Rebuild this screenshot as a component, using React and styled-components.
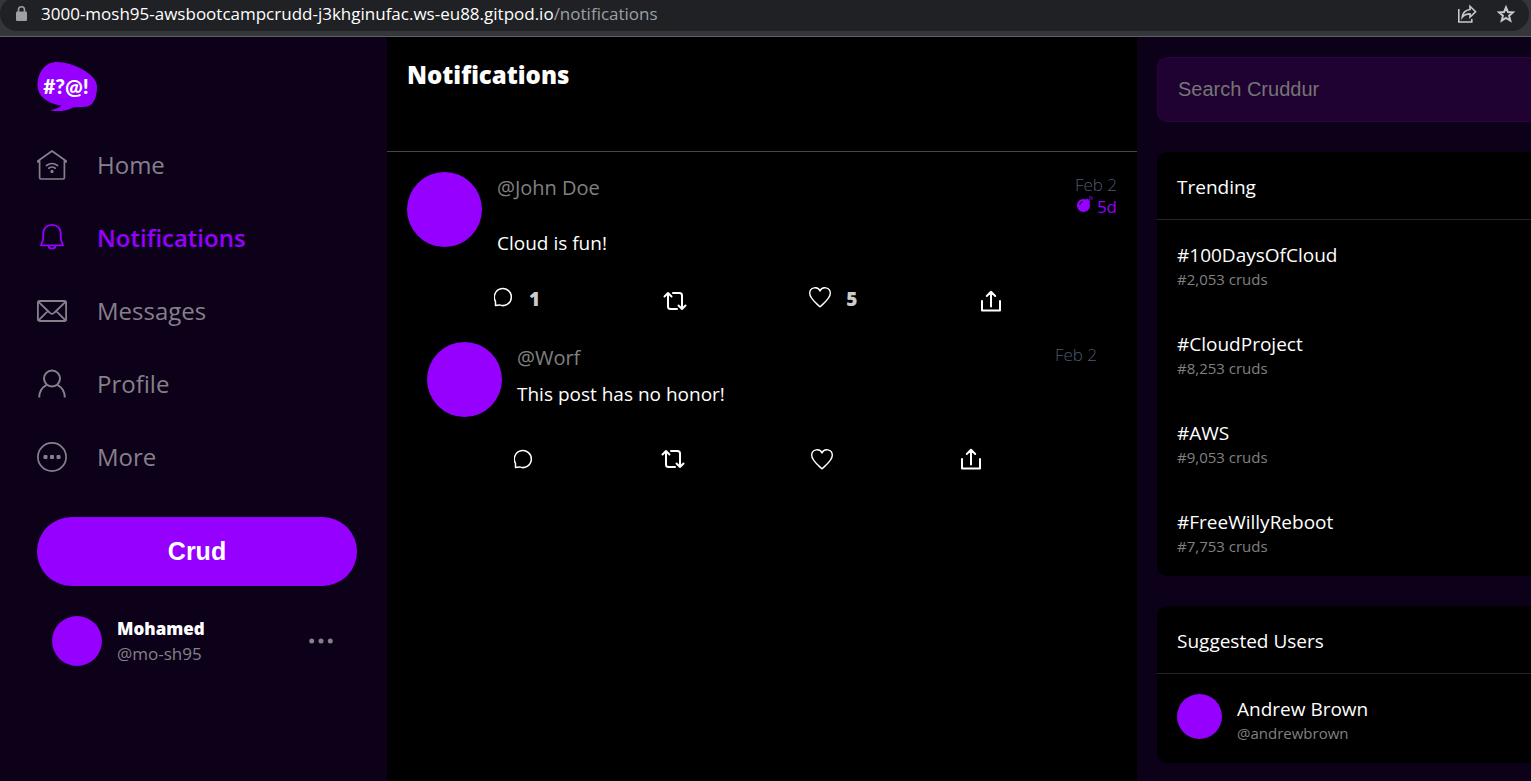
import React from "react";
import styled, { createGlobalStyle, css } from "styled-components";
import { FaBomb } from "react-icons/fa";

const purple = "#9500ff";
const ui = `"Open Sans", "Noto Sans", sans-serif`;
const arial = `"Liberation Sans", Arial, sans-serif`;

const GlobalStyle = createGlobalStyle`
  * { box-sizing: border-box; }
  body { margin: 0; background: #000; color: #fff; font-family: ${ui}; }
  a { color: inherit; text-decoration: none; }
  button { border: 0; padding: 0; background: none; color: inherit; font-family: inherit; cursor: pointer; }
  h1, h2, p, ul { margin: 0; padding: 0; list-style: none; }
  svg { display: block; flex: none; }
`;

/* ---------- shell ---------- */

const Page = styled.div`
  min-height: 100vh;
  display: flex;
  flex-direction: column;
  overflow: hidden;
`;

const BrowserBar = styled.header`
  background: #35363a;
  border-bottom: 1px solid #5f6063;
  padding: 0 2px 5px 0;
`;

const AddressBox = styled.div`
  height: 34px;
  margin-top: -3px;
  padding: 0 12px 0 15px;
  border-radius: 17px;
  background: #202124;
  color: #9aa0a6;
  display: flex;
  align-items: center;
  gap: 13px;
`;

const Address = styled.p`
  flex: 1;
  min-width: 0;
  white-space: nowrap;
  overflow: hidden;
  font-size: 17px;
  line-height: 28px;
  b { color: #fff; font-weight: 400; }
`;

const BrowserTools = styled.div`
  display: flex;
  gap: 18px;
  color: #c7c8ca;
`;

const Layout = styled.div`
  flex: 1;
  display: grid;
  grid-template-columns: 387px minmax(0, 1fr) 394px;
`;

/* ---------- left sidebar ---------- */

const Sidebar = styled.aside`
  background: #0d0119;
  padding: 25px 30px 25px 37px;
`;

const Nav = styled.nav`
  margin: 17px 0 24px;
`;

const NavLink = styled.a`
  display: flex;
  align-items: center;
  gap: 30px;
  height: 73px;
  font-size: 24px;
  color: #86808b;
  ${(p) => p.$active && css`
    && { color: ${purple}; font-weight: 600; }
  `}
`;

const CrudButton = styled.button`
  && {
    display: block;
    width: 100%;
    height: 69px;
    border-radius: 35px;
    background: ${purple};
    color: #fff;
    font: bold 25px ${arial};
  }
`;

const Account = styled.div`
  display: flex;
  align-items: center;
  gap: 15px;
  padding: 30px 24px 0 15px;
  color: #86808b;
`;

const AccountText = styled.div`
  flex: 1;
  font-size: 17px;
  line-height: 25px;
  strong { display: block; color: #fff; font-weight: 800; }
`;

const Avatar = styled.div`
  flex: none;
  width: ${(p) => p.$size}px;
  height: ${(p) => p.$size}px;
  border-radius: 50%;
  background: ${purple};
`;

/* ---------- feed ---------- */

const FeedHeader = styled.div`
  height: 115px;
  padding: 20px;
  border-bottom: 1px solid #45454b;
  h1 { font-size: 24px; line-height: 36px; font-weight: 800; }
`;

const Post = styled.article`
  padding: 20px 20px 10px;
  margin: 0 ${(p) => (p.$reply ? 20 : 0)}px;
`;

const PostMain = styled.div`
  display: flex;
  gap: 15px;
  min-height: 77px;
`;

const PostContent = styled.div`
  flex: 1;
  padding-top: 2px;
  font-size: 19px;
  line-height: 27px;
`;

const PostTop = styled.div`
  display: flex;
  justify-content: space-between;
  margin-bottom: 10px;
  font-size: 20px;
  color: #808080;
`;

const PostMeta = styled.div`
  padding-bottom: 2px;
  font-size: 17px;
  line-height: 22px;
  font-weight: 300;
  color: #4e5a70;
  text-align: right;
`;

const Expires = styled.div`
  display: flex;
  justify-content: flex-end;
  gap: 4px;
  color: ${purple};
  font-weight: 400;
`;

const Activities = styled.div`
  display: flex;
  justify-content: space-between;
  align-items: flex-end;
  padding: 0 115px 0 87px;
  margin-top: 29px;
`;

const Activity = styled.button`
  display: flex;
  align-items: flex-start;
  gap: 15px;
  span {
    font-size: 19px;
    line-height: 26px;
    font-weight: 800;
    color: #ccc;
  }
`;

/* ---------- right column ---------- */

const Aside = styled.aside`
  background: #0d0119;
  padding: 20px 0 18px 20px;
  display: flex;
  flex-direction: column;
  gap: 30px;
`;

const Search = styled.input`
  width: 100%;
  height: 65px;
  padding: 0 20px;
  border: 1px solid #28053f;
  border-right: 0;
  border-radius: 10px 0 0 10px;
  background: #1f0232;
  color: #fff;
  outline: none;
  font: 20px ${arial};
  &::placeholder { color: #757575; opacity: 1; }
`;

const Card = styled.section`
  background: #000;
  border-radius: 10px 0 0 10px;
  h2 {
    padding: 22px 20px 18px;
    border-bottom: 1px solid #24242c;
    font-size: 19px;
    line-height: 27px;
    font-weight: 400;
  }
`;

const CardItem = styled.a`
  display: flex;
  gap: 15px;
  padding: 20px;
  height: 89px;
`;

const ItemText = styled.div`
  padding-top: 2px;
  font-size: 19px;
  line-height: 27px;
  small {
    display: block;
    font-size: 15px;
    line-height: 20px;
    color: #808080;
  }
`;

/* ---------- icons ---------- */

const Stroke = ({ w, h = w, sw = 2, children }) => (
  <svg width={w} height={h} viewBox={`0 0 ${w} ${h}`} fill="none" stroke="currentColor"
    strokeWidth={sw} strokeLinecap="round" strokeLinejoin="round" aria-hidden="true">
    {children}
  </svg>
);

const HomeIcon = () => (
  <Stroke w={30} sw={1.7}>
    <path d="M.9 12V11L15 1l14.100 10v1M2.600 11v16.500a1.500 1.500 0 0 0 1.500 1.500h21.800a1.500 1.500 0 0 0 1.500-1.500V11" />
    <path d="M9.500 15.500q5.500-4 11 0M11.800 18.200q3.200-2.400 6.400 0" />
    <circle cx="15" cy="21.500" r=".8" fill="currentColor" />
  </Stroke>
);

const BellIcon = () => (
  <Stroke w={30} sw={1.8}>
    <path d="M15 1.800c-5.600 0-8.800 3.800-8.800 8.800v5.500c0 2.700-2.200 4.200-2.200 6.200h22c0-2-2.200-3.500-2.200-6.200v-5.500c0-5-3.200-8.800-8.800-8.800Z" />
    <path d="M11.500 22.600c.2 4 6.800 4 7 0" />
  </Stroke>
);

const MailIcon = () => (
  <Stroke w={30} sw={1.8}>
    <rect x=".9" y="5" width="28.200" height="20" rx="1.800" />
    <path d="M1.500 5.800 12.500 16.500q2.500 2.600 5 0L28.500 5.800M1.500 24.300l9-9M28.500 24.300l-9-9" />
  </Stroke>
);

const ProfileIcon = () => (
  <Stroke w={30} sw={2}>
    <circle cx="15" cy="9.500" r="8" />
    <path strokeLinecap="butt" d="M2.200 28.500c0-6.500 3-10.500 7.500-12.700M27.800 28.500c0-6.500-3-10.500-7.500-12.700" />
  </Stroke>
);

const MoreIcon = () => (
  <Stroke w={30} sw={1.7}>
    <circle cx="15" cy="15" r="14.100" />
    <g fill="currentColor" stroke="none">
      <rect x="6.500" y="13" width="4" height="4" rx="1" />
      <rect x="13" y="13" width="4" height="4" rx="1" />
      <rect x="19.500" y="13" width="4" height="4" rx="1" />
    </g>
  </Stroke>
);

const DotsIcon = () => (
  <svg width="24" height="6" viewBox="0 0 24 6" fill="currentColor" aria-hidden="true">
    <circle cx="2.700" cy="3" r="2.500" /><circle cx="12" cy="3" r="2.500" /><circle cx="21.300" cy="3" r="2.500" />
  </svg>
);

const ReplyIcon = () => (
  <Stroke w={20} h={22} sw={1.5}>
    <path d="M1.500 19.500V15.400A8.500 8.500 0 1 1 5.500 18.900Z" />
  </Stroke>
);

const RepostIcon = () => (
  <Stroke w={24} h={22} sw={2}>
    <path d="M1.500 6.500 5 3l3.500 3.500M5 3.500v13A2.500 2.500 0 0 0 7.500 19H14M22.500 15.500 19 19l-3.500-3.500M19 18.500v-13A2.500 2.500 0 0 0 16.500 3H10" />
  </Stroke>
);

const HeartIcon = () => (
  <Stroke w={22} h={22} sw={1.4}>
    <path d="M11 20.800C6.500 16.500.7 12.600.7 7.300c0-6.300 8.300-7.500 10.300-2.300 2-5.200 10.300-4 10.300 2.300 0 5.300-5.800 9.200-10.300 13.500Z" />
  </Stroke>
);

const ShareIcon = () => (
  <Stroke w={22} h={22} sw={2}>
    <path d="M2 11v9.500h18V11M11 16.500V2M6.800 6 11 1.800 15.200 6" />
  </Stroke>
);

const LockIcon = () => (
  <svg width="13" height="16" viewBox="0 0 13 16" aria-hidden="true">
    <rect x="1" y="5.500" width="11" height="9.500" rx="1.200" fill="currentColor" />
    <path d="M3.500 6V3.800a3 3 0 0 1 6 0V6" fill="none" stroke="currentColor" strokeWidth="1.600" />
  </svg>
);

const PageShareIcon = () => (
  <Stroke w={20} h={20} sw={1.6}>
    <path strokeLinejoin="miter" strokeLinecap="butt" d="M1.800 5v13h13v-3" />
    <path strokeLinejoin="miter" d="M13 2.300 18.600 7.800 13 13.200v-3.300c-3.500 0-6 .9-7.800 3.300.5-4.300 3.300-7.100 7.800-7.700Z" />
  </Stroke>
);

const StarIcon = () => (
  <Stroke w={22} h={20} sw={2}>
    <path strokeLinejoin="miter" d="M11 3.400 12.900 8l5 .4-3.800 3.300 1.200 4.900L11 14l-4.300 2.600 1.200-4.900L4.100 8.400l5-.4Z" />
  </Stroke>
);

const Logo = () => (
  <svg width="61" height="49" viewBox="0 0 61 49" role="img" aria-label="Cruddur">
    <path fill={purple} d="M20 0C36 0 59.500 12 60 24c.2 7-1.500 14-5 18-4 4-14 3-19 3.500-7 4-15 4.500-23 2.700 5-.8 9-2.200 11.500-4.700C11 42 0 34 .5 22.500 1 9 9 0 20 0Z" />
    <text x="29" y="32" textAnchor="middle" fill="#fff" fontFamily="Lato, sans-serif" fontWeight="900" fontSize="21">#?@!</text>
  </svg>
);

/* ---------- data ---------- */

const links = [
  ["Home", HomeIcon],
  ["Notifications", BellIcon],
  ["Messages", MailIcon],
  ["Profile", ProfileIcon],
  ["More", MoreIcon],
];

const posts = [
  { handle: "John Doe", text: "Cloud is fun!", date: "Feb 2", expires: "5d", replies: 1, likes: 5 },
  { handle: "Worf", text: "This post has no honor!", date: "Feb 2", reply: true },
];

const trends = [
  ["#100DaysOfCloud", "#2,053 cruds"],
  ["#CloudProject", "#8,253 cruds"],
  ["#AWS", "#9,053 cruds"],
  ["#FreeWillyReboot", "#7,753 cruds"],
];

const PostItem = ({ post }) => (
  <Post $reply={post.reply}>
    <PostMain>
      <Avatar $size={75} />
      <PostContent>
        <PostTop>
          <a href="#user">@{post.handle}</a>
          <PostMeta>
            <div>{post.date}</div>
            {post.expires && <Expires><FaBomb size={16} />{post.expires}</Expires>}
          </PostMeta>
        </PostTop>
        <p>{post.text}</p>
      </PostContent>
    </PostMain>
    <Activities>
      <Activity aria-label="Reply"><ReplyIcon />{post.replies && <span>{post.replies}</span>}</Activity>
      <Activity aria-label="Repost"><RepostIcon /></Activity>
      <Activity aria-label="Like"><HeartIcon />{post.likes && <span>{post.likes}</span>}</Activity>
      <Activity aria-label="Share"><ShareIcon /></Activity>
    </Activities>
  </Post>
);

export default function App() {
  return (
    <Page>
      <GlobalStyle />
      <BrowserBar>
        <AddressBox>
          <LockIcon />
          <Address><b>3000-mosh95-awsbootcampcrudd-j3khginufac.ws-eu88.gitpod.io</b>/notifications</Address>
          <BrowserTools>
            <button aria-label="Share this page"><PageShareIcon /></button>
            <button aria-label="Bookmark this page"><StarIcon /></button>
          </BrowserTools>
        </AddressBox>
      </BrowserBar>
      <Layout>
        <Sidebar>
          <Logo />
          <Nav>
            {links.map(([label, Icon]) => (
              <NavLink key={label} href={`#${label.toLowerCase()}`} $active={label === "Notifications"}>
                <Icon />{label}
              </NavLink>
            ))}
          </Nav>
          <CrudButton>Crud</CrudButton>
          <Account>
            <Avatar $size={50} />
            <AccountText><strong>Mohamed</strong>@mo-sh95</AccountText>
            <button aria-label="Account menu"><DotsIcon /></button>
          </Account>
        </Sidebar>
        <main>
          <FeedHeader><h1>Notifications</h1></FeedHeader>
          {posts.map((post) => <PostItem key={post.handle} post={post} />)}
        </main>
        <Aside>
          <Search type="text" placeholder="Search Cruddur" aria-label="Search Cruddur" />
          <Card>
            <h2>Trending</h2>
            {trends.map(([tag, count]) => (
              <CardItem key={tag} href="#trend"><ItemText>{tag}<small>{count}</small></ItemText></CardItem>
            ))}
          </Card>
          <Card>
            <h2>Suggested Users</h2>
            <CardItem href="#andrewbrown">
              <Avatar $size={45} />
              <ItemText>Andrew Brown<small>@andrewbrown</small></ItemText>
            </CardItem>
          </Card>
        </Aside>
      </Layout>
    </Page>
  );
}
